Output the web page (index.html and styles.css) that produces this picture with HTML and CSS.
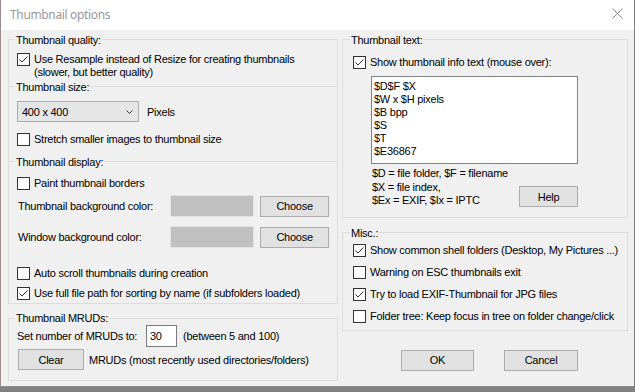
FILE: index.html
```html
<!DOCTYPE html>
<html lang="en">
<head>
  <meta charset="UTF-8">
  <title>Thumbnail options</title>
  <link rel="stylesheet" href="styles.css">
</head>
<body>

  <div class="window">
    <!-- title bar -->
    <div class="titlebar">
      <span class="title">Thumbnail options</span>
      <svg class="close" width="11" height="11" viewBox="0 0 11 11">
        <path d="M0.5 0.5 L10.5 10.5 M10.5 0.5 L0.5 10.5" stroke="#8a8a8a" stroke-width="1" fill="none"/>
      </svg>
    </div>

    <div class="content">
      <!-- left column -->
      <div class="col col-left">
        <div class="stack">
          <fieldset class="grp sub quality">
            <legend>Thumbnail quality:</legend>
            <label class="check">
              <span class="box on"><svg width="11" height="11" viewBox="0 0 11 11"><polyline points="1.5,5.5 4,8 9.5,2.5" fill="none" stroke="#333" stroke-width="1"/></svg></span>
              <span>Use Resample instead of Resize for creating thumbnails<br>(slower, but better quality)</span>
            </label>
          </fieldset>

          <fieldset class="grp sub size">
            <legend>Thumbnail size:</legend>
            <div class="size-row">
              <div class="combo">
                <span>400 x 400</span>
                <svg width="7" height="4" viewBox="0 0 7 4"><polyline points="0.5,0.5 3.5,3.5 6.5,0.5" fill="none" stroke="#333" stroke-width="1"/></svg>
              </div>
              <span class="unit">Pixels</span>
            </div>
            <label class="check stretch">
              <span class="box"></span>
              <span>Stretch smaller images to thumbnail size</span>
            </label>
          </fieldset>

          <fieldset class="grp sub display">
            <legend>Thumbnail display:</legend>
            <label class="check">
              <span class="box"></span>
              <span>Paint thumbnail borders</span>
            </label>
            <div class="color-row first">
              <span class="color-label">Thumbnail background color:</span>
              <span class="swatch"></span>
              <button class="btn choose" type="button">Choose</button>
            </div>
            <div class="color-row">
              <span class="color-label">Window background color:</span>
              <span class="swatch"></span>
              <button class="btn choose" type="button">Choose</button>
            </div>
            <label class="check autoscroll">
              <span class="box"></span>
              <span>Auto scroll thumbnails during creation</span>
            </label>
            <label class="check fullpath">
              <span class="box on"><svg width="11" height="11" viewBox="0 0 11 11"><polyline points="1.5,5.5 4,8 9.5,2.5" fill="none" stroke="#333" stroke-width="1"/></svg></span>
              <span>Use full file path for sorting by name (if subfolders loaded)</span>
            </label>
          </fieldset>
        </div>

        <fieldset class="grp mru">
          <legend>Thumbnail MRUDs:</legend>
          <div class="mru-row">
            <span class="mru-label">Set number of MRUDs to:</span>
            <span class="num">30</span>
            <span class="range">(between 5 and 100)</span>
          </div>
          <div class="clear-row">
            <button class="btn clear" type="button">Clear</button>
            <span>MRUDs (most recently used directories/folders)</span>
          </div>
        </fieldset>
      </div>

      <!-- right column -->
      <div class="col col-right">
        <fieldset class="grp side text-grp">
          <legend>Thumbnail text:</legend>
          <label class="check">
            <span class="box on"><svg width="11" height="11" viewBox="0 0 11 11"><polyline points="1.5,5.5 4,8 9.5,2.5" fill="none" stroke="#333" stroke-width="1"/></svg></span>
            <span>Show thumbnail info text (mouse over):</span>
          </label>
          <div class="info">
            <div>$D$F $X</div>
            <div>$W x $H pixels</div>
            <div>$B bpp</div>
            <div>$S</div>
            <div>$T</div>
            <div>$E36867</div>
          </div>
          <div class="help-row">
            <div class="help-text">
              <div>$D = file folder, $F = filename</div>
              <div>$X = file index,</div>
              <div>$Ex = EXIF, $Ix = IPTC</div>
            </div>
            <button class="btn help" type="button">Help</button>
          </div>
        </fieldset>

        <fieldset class="grp side misc">
          <legend>Misc.:</legend>
          <label class="check">
            <span class="box on"><svg width="11" height="11" viewBox="0 0 11 11"><polyline points="1.5,5.5 4,8 9.5,2.5" fill="none" stroke="#333" stroke-width="1"/></svg></span>
            <span>Show common shell folders (Desktop, My Pictures ...)</span>
          </label>
          <label class="check">
            <span class="box"></span>
            <span>Warning on ESC thumbnails exit</span>
          </label>
          <label class="check">
            <span class="box on"><svg width="11" height="11" viewBox="0 0 11 11"><polyline points="1.5,5.5 4,8 9.5,2.5" fill="none" stroke="#333" stroke-width="1"/></svg></span>
            <span>Try to load EXIF-Thumbnail for JPG files</span>
          </label>
          <label class="check">
            <span class="box"></span>
            <span>Folder tree: Keep focus in tree on folder change/click</span>
          </label>
        </fieldset>

        <div class="actions">
          <button class="btn ok" type="button">OK</button>
          <button class="btn cancel" type="button">Cancel</button>
        </div>
      </div>
    </div>
  </div>

</body>
</html>
```

FILE: styles.css
```css
* {
  box-sizing: border-box;
}

body {
  margin: 0;
  height: 392px;
  overflow: hidden;
  background: linear-gradient(#a3a3a3, #808080);
  font-family: "Liberation Sans", Arial, sans-serif;
  font-size: 11px;
  letter-spacing: -0.25px;
  color: #000;
}

.window {
  width: 635px;
  height: 387px;
  background: #f0f0f0;
  border-left: 1px solid #9d8c8c;
  border-right: 1px solid #7c7c7c;
  border-bottom: 1px solid #8d8d8d;
}

.titlebar {
  height: 30px;
  background: #fff;
  display: flex;
  align-items: center;
  justify-content: space-between;
  padding: 0 11px 2px 9px;
}

.title {
  font-family: "Noto Sans", sans-serif;
  font-size: 12px;
  letter-spacing: -0.35px;
  color: #999;
}

.close {
  display: block;
  margin-bottom: 2px;
}

.content {
  display: flex;
  gap: 4px;
  padding: 2px 0 0 7px;
}

.col-left {
  width: 330px;
}

.col-right {
  width: 286px;
}

/* group boxes */
.grp {
  margin: 0;
  min-width: 0;
  border: 1px solid #dcdcdc;
  padding: 0 8px;
}

.grp legend {
  padding: 2px 1px 0;
  margin-left: -2px;
  line-height: 13px;
}

.stack {
  border-bottom: 1px solid #dcdcdc;
  background:
    linear-gradient(#dcdcdc, #dcdcdc) left 7px / 1px calc(100% - 7px) no-repeat,
    linear-gradient(#dcdcdc, #dcdcdc) right 7px / 1px calc(100% - 7px) no-repeat;
}

.sub {
  border-left: none;
  border-right: none;
  border-bottom: none;
  padding: 0 9px;
}

.check {
  display: flex;
  align-items: flex-start;
  gap: 4px;
  line-height: 13px;
  white-space: nowrap;
}

.box {
  flex: none;
  width: 13px;
  height: 13px;
  border: 1px solid #333;
  background: #fff;
}

.box svg {
  display: block;
}

.quality .check {
  margin-top: 6px;
}

.size-row {
  display: flex;
  align-items: center;
  gap: 8px;
  margin-top: 7px;
}

.combo {
  width: 122px;
  height: 21px;
  border: 1px solid #acacac;
  background: #e5e5e5;
  display: flex;
  align-items: center;
  justify-content: space-between;
  padding: 0 5px 0 4px;
}

.combo svg {
  display: block;
}

.stretch {
  margin-top: 11px;
  margin-bottom: 8px;
}

.display .check {
  margin-top: 8px;
}

.display .autoscroll {
  margin-top: 19px;
}

.display .fullpath {
  margin-top: 7px;
  margin-bottom: 3px;
}

.color-row {
  display: flex;
  align-items: center;
  height: 22px;
  margin-top: 9px;
  white-space: nowrap;
}

.color-row.first {
  margin-top: 5px;
}

.color-label {
  width: 153px;
  padding-left: 1px;
}

.swatch {
  width: 85px;
  height: 22px;
  background: #c0c0c0;
  border: 1px solid #e2e2e2;
}

.btn {
  font-family: inherit;
  font-size: 11px;
  letter-spacing: -0.25px;
  color: #000;
  background: #e1e1e1;
  border: 1px solid #adadad;
  height: 21px;
  padding: 0;
}

.choose {
  width: 69px;
  margin-left: 6px;
}

/* MRUDs */
.mru {
  margin-top: 8px;
  padding-bottom: 10px;
}

.mru legend {
  padding-top: 0;
}

.mru-row {
  display: flex;
  align-items: center;
  white-space: nowrap;
}

.mru-label {
  width: 129px;
}

.num {
  width: 31px;
  height: 22px;
  background: #fff;
  border: 1px solid #7a7a7a;
  padding: 3px 0 0 3px;
  line-height: 14px;
}

.range {
  margin-left: 6px;
}

.clear-row {
  display: flex;
  align-items: center;
  gap: 5px;
  margin-top: 2px;
  white-space: nowrap;
}

.clear {
  width: 66px;
  margin-left: 1px;
}

/* right side */
.side {
  padding: 0 8px 0 10px;
}

.side legend {
  margin-left: -3px;
}

.text-grp .check {
  margin-top: 9px;
}

.info {
  width: 207px;
  height: 88px;
  margin: 7px 0 0 18px;
  background: #fff;
  border: 1px solid #828282;
  padding: 3px 2px;
  line-height: 13px;
}

.help-row {
  display: flex;
  justify-content: space-between;
  align-items: flex-start;
  width: 225px;
  padding-bottom: 9px;
  white-space: nowrap;
}

.help-text {
  margin: 3px 0 0 19px;
  line-height: 13.5px;
}

.help {
  width: 59px;
  margin-top: 22px;
}

.misc {
  margin-top: 7px;
  padding-bottom: 7px;
}

.misc .check {
  margin-top: 9px;
}

.misc .check:first-of-type {
  margin-top: 4px;
}

.actions {
  display: flex;
  justify-content: flex-end;
  gap: 30px;
  margin-top: 19px;
  padding-right: 50px;
}

.ok {
  width: 73px;
}

.cancel {
  width: 74px;
}
```
